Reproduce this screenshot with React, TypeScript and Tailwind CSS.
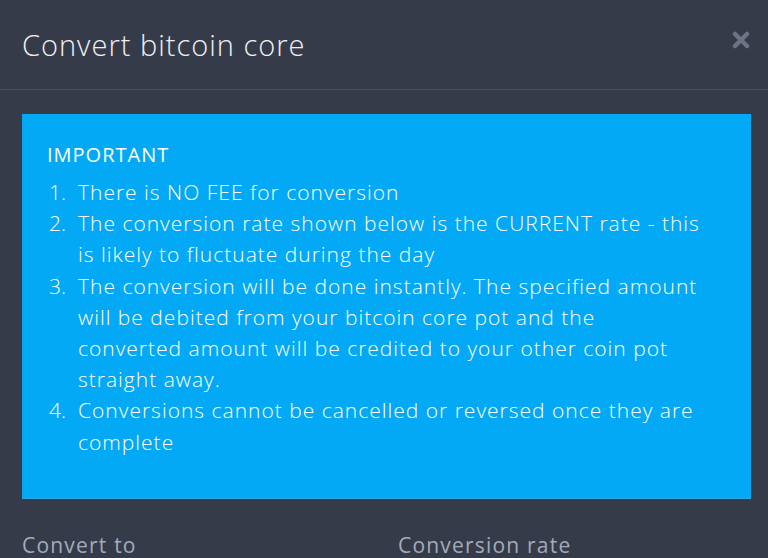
import React from "react";

const items: string[][] = [
  ["There is NO FEE for conversion"],
  ["The conversion rate shown below is the CURRENT rate - this", "is likely to fluctuate during the day"],
  [
    "The conversion will be done instantly. The specified amount",
    "will be debited from your bitcoin core pot and the",
    "converted amount will be credited to your other coin pot",
    "straight away.",
  ],
  ["Conversions cannot be cancelled or reversed once they are", "complete"],
];

export default function App() {
  return (
    <div className="w-[768px] h-[558px] overflow-hidden bg-[#363b49]" style={{ fontFamily: '"Open Sans", "Noto Sans", sans-serif' }}>
      <div className="h-[90px] flex items-center justify-between pl-[22px] pr-[18px] border-b border-[#4b5060]">
        <h1 className="text-[29px] font-light text-[#eef0f4] tracking-[1px] leading-[36px]">Convert bitcoin core</h1>
        <svg width="18" height="18" viewBox="0 0 18 18" className="-mt-[10px]">
          <path d="M3 3 L15 15 M15 3 L3 15" stroke="#6d7382" strokeWidth="4.5" strokeLinecap="round" />
        </svg>
      </div>
      <div className="pl-[22px] pr-[17px] pt-[24px]">
        <div className="bg-[#03a9f4] pl-[25px] pr-[20px] pt-[29px] pb-[40px] border-b border-[#2aa6e0]">
          <div className="text-[20px] font-medium text-white leading-[24px] tracking-[1px]">IMPORTANT</div>
          <div className="mt-[10px] text-[21px] font-light text-white leading-[31.2px] tracking-[1px]">
            {items.map((lines, i) => (
              <div key={i} className="flex">
                <div className="w-[31px] shrink-0 text-right pr-[12px] tracking-normal">{i + 1}.</div>
                <div>
                  {lines.map((l, j) => (
                    <div key={j} className="whitespace-nowrap">{l}</div>
                  ))}
                </div>
              </div>
            ))}
          </div>
        </div>
        <div className="flex mt-[31px] text-[21px] font-medium text-[#a3abbb] tracking-[1.2px]">
          <div className="w-[376px]">Convert to</div>
          <div>Conversion rate</div>
        </div>
      </div>
    </div>
  );
}
